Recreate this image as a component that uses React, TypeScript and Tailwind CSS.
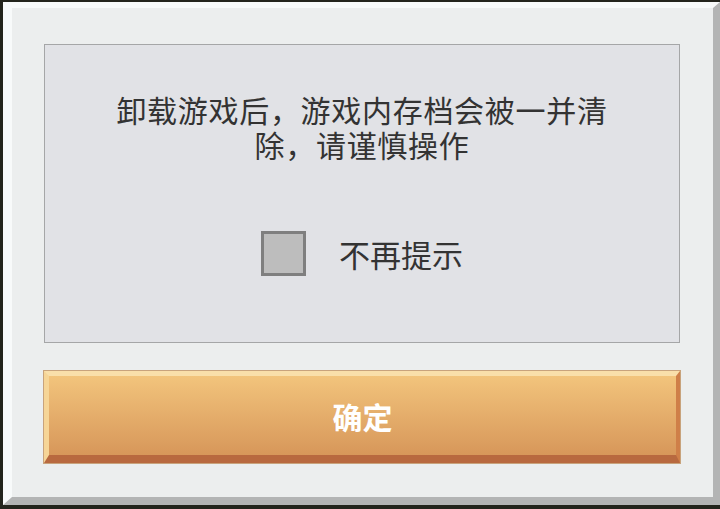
import React, { useState } from 'react';

const font = { fontFamily: '"Noto Sans CJK SC", "Noto Sans", sans-serif' };

const App: React.FC = () => {
    const [dontShow, setDontShow] = useState(false);

    return (
        <div className="w-[720px] h-[509px] bg-[#23241c] pt-[2px] pl-[3px] pb-[4px] overflow-hidden" style={font}>
            <div className="h-full border-l-[9px] border-t-[6px] border-r-[7px] border-b-[8px] border-l-[#f8fafa] border-t-[#f8fafa] border-r-[#b3b4b4] border-b-[#b3b4b4] bg-[#eceeee] pl-[32px] pr-[33px] pt-[36px] flex flex-col">
                {/* message box */}
                <div className="h-[299px] border border-[#a5a6a7] bg-[#e1e2e6] flex flex-col items-center">
                    <div className="mt-[47px] flex flex-col items-center text-[30px] leading-[35px] tracking-[0.7px] text-[#333333] whitespace-nowrap">
                        <span>卸载游戏后，游戏内存档会被一并清</span>
                        <span>除，请谨慎操作</span>
                    </div>
                    <label className="mt-[69px] flex items-center gap-[33px] cursor-pointer" onClick={() => setDontShow(!dontShow)}>
                        <span className="w-[45px] h-[45px] border-[3px] border-[#7f7f7f] bg-[#bdbdbd] flex items-center justify-center">
                            {dontShow && <span className="w-[22px] h-[22px] bg-[#555]" />}
                        </span>
                        <span className="text-[31px] leading-[40px] text-[#333333]">不再提示</span>
                    </label>
                </div>

                {/* confirm button */}
                <button className="mt-[28px] h-[92px] w-full border-l-[5px] border-t-[5px] border-r-[4px] border-b-[8px] border-l-[#f6d597] border-t-[#f9dfaa] border-r-[#cf7f48] border-b-[#b8693f] bg-gradient-to-b from-[#f2c47c] to-[#d7975a] flex items-center justify-center outline outline-1 outline-[#c8a37c]">
                    <span className="text-[30px] font-bold text-white leading-none">确定</span>
                </button>
            </div>
        </div>
    );
};

export default App;
